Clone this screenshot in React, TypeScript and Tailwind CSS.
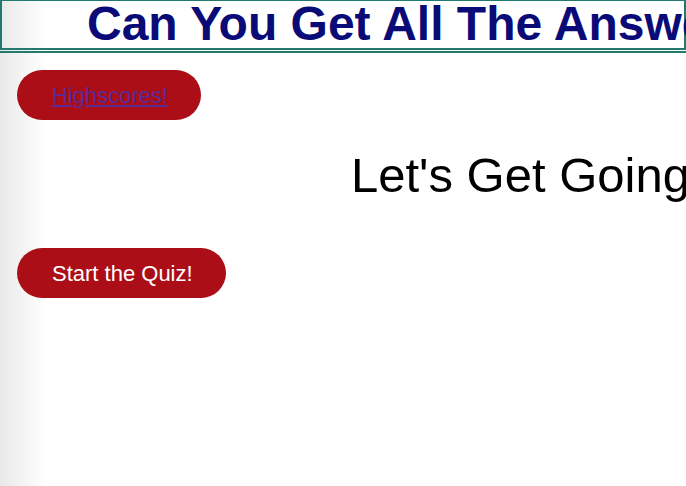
import React from 'react';

const App: React.FC = () => {
  return (
    <div className="min-h-[486px] w-[686px] overflow-hidden bg-linear-to-r from-[#e9e9e9] to-white to-[46px] font-['Liberation_Sans',Arial,sans-serif]">
      <header className="border-x-2 border-t border-b-2 border-[#217a6d] h-[50px] whitespace-nowrap overflow-visible">
        <h1 className="pl-[85px] text-[48px] leading-[46px] font-bold text-[#0b0b78]">
          Can You Get All The Answers Right?
        </h1>
      </header>
      <div className="mt-px h-[2px] bg-[#217a6d]" />

      <div className="px-[17px]">
        <div className="mt-[17px]">
          <button className="h-[50px] rounded-full bg-[#ab0e16] pl-[35px] pr-[33px] text-[22px]">
            <a href="#" className="text-[#5a2a98] underline">
              Highscores!
            </a>
          </button>
        </div>

        <h2 className="mt-[28px] pl-[334px] whitespace-nowrap text-[49px] leading-[55px] text-black">
          Let's Get Going
        </h2>

        <div className="mt-[45px]">
          <button className="h-[50px] rounded-full bg-[#ab0e16] pl-[35px] pr-[33px] text-[22px] text-white">
            Start the Quiz!
          </button>
        </div>
      </div>
    </div>
  );
};

export default App;
